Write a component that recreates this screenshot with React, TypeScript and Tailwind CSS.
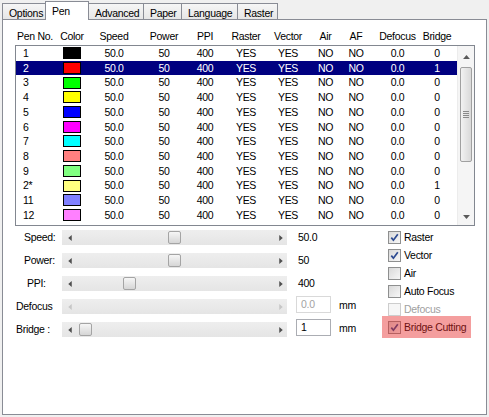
import React from 'react';

const tabs = [
  { label: 'Options', w: 'w-[44px]' },
  { label: 'Pen', w: 'w-[44px]', active: true },
  { label: 'Advanced', w: 'w-[56px]' },
  { label: 'Paper', w: 'w-[39px]' },
  { label: 'Language', w: 'w-[57px]' },
  { label: 'Raster', w: 'w-[41px]' },
];

const pens = [
  { no: '1', sw: 'bg-[#000000]', bridge: '0' },
  { no: '2', sw: 'bg-[#ff0000]', bridge: '1', sel: true },
  { no: '3', sw: 'bg-[#00ff00]', bridge: '0' },
  { no: '4', sw: 'bg-[#ffff00]', bridge: '0' },
  { no: '5', sw: 'bg-[#0000ff]', bridge: '0' },
  { no: '6', sw: 'bg-[#ff00ff]', bridge: '0' },
  { no: '7', sw: 'bg-[#00ffff]', bridge: '0' },
  { no: '8', sw: 'bg-[#ff8080]', bridge: '0' },
  { no: '9', sw: 'bg-[#80ff80]', bridge: '0' },
  { no: '2*', sw: 'bg-[#ffff80]', bridge: '1' },
  { no: '11', sw: 'bg-[#8080ff]', bridge: '0' },
  { no: '12', sw: 'bg-[#ff80ff]', bridge: '0' },
];

// columns after Pen No. / Color, centred on the header text
const cols = [
  { label: 'Speed', w: 'w-[52px]', v: '50.0' },
  { label: 'Power', w: 'w-[48px]', v: '50' },
  { label: 'PPI', w: 'w-[34px]', v: '400' },
  { label: 'Raster', w: 'w-[48px]', v: 'YES' },
  { label: 'Vector', w: 'w-[36px]', v: 'YES' },
  { label: 'Air', w: 'w-[39px]', v: 'NO' },
  { label: 'AF', w: 'w-[22px]', v: 'NO' },
  { label: 'Defocus', w: 'w-[61px]', v: '0.0' },
  { label: 'Bridge', w: 'w-[18px]', v: '' },
];

const sliders = [
  { label: 'Speed:', pl: 'pl-[21px]', thumb: 106, value: '50.0' },
  { label: 'Power:', pl: 'pl-[21px]', thumb: 106, value: '50' },
  { label: 'PPI:', pl: 'pl-[24px]', thumb: 61, value: '400' },
  { label: 'Defocus', pl: 'pl-[13px]', thumb: null, input: '0.0', disabled: true },
  { label: 'Bridge :', pl: 'pl-[13px]', thumb: 17, input: '1' },
];

const checks = [
  { label: 'Raster', on: true },
  { label: 'Vector', on: true },
  { label: 'Air' },
  { label: 'Auto Focus' },
  { label: 'Defocus', disabled: true },
  { label: 'Bridge Cutting', on: true, hl: true },
];

function Tri({ dir, color }: { dir: 'left' | 'right' | 'up' | 'down'; color: string }) {
  const d = {
    left: 'M3.5 0 L0 3 L3.5 6 Z',
    right: 'M0 0 L3.5 3 L0 6 Z',
    up: 'M0 3.5 L3 0 L6 3.5 Z',
    down: 'M0 0 L6 0 L3 3.5 Z',
  }[dir];
  const horiz = dir === 'left' || dir === 'right';
  return (
    <svg width={horiz ? 4 : 7} height={horiz ? 6 : 4} viewBox={horiz ? '0 0 3.5 6' : '0 0 6 3.5'}>
      <path d={d} fill={color} />
    </svg>
  );
}

function Track({ thumb, disabled }: { thumb: number | null; disabled?: boolean }) {
  const c = disabled ? '#c6c6c6' : '#4f4f4f';
  return (
    <div className="relative flex h-[15px] w-[225px] items-center justify-between bg-gradient-to-b from-[#eeeeee] to-[#e5e5e5] pl-[6px] pr-[4px]">
      <Tri dir="left" color={c} />
      <Tri dir="right" color={c} />
      {thumb !== null && (
        <div
          className="absolute top-[1px] h-[13px] w-[13px] rounded-[2px] border border-[#a4a4a4] bg-gradient-to-b from-[#f6f6f6] to-[#d6d6d6]"
          style={{ left: thumb }}
        />
      )}
    </div>
  );
}

function CheckBox({ on, disabled }: { on?: boolean; disabled?: boolean }) {
  return (
    <div
      className={`flex h-[13px] w-[13px] items-center justify-center border ${
        disabled
          ? 'border-[#cdcdcd] bg-[#f6f6f6]'
          : 'border-[#8e8f8f] bg-gradient-to-br from-[#d9d9d9] to-[#f7f7f7]'
      }`}
    >
      {on && (
        <svg width="9" height="9" viewBox="0 0 9 9">
          <path d="M1.3 4.6 L3.4 7.2 L7.8 1.2" fill="none" stroke="#2c4a91" strokeWidth="1.7" />
        </svg>
      )}
    </div>
  );
}

function PenList() {
  return (
    <div className="ml-[12px] flex h-[181px] w-[460px] border border-[#828790] bg-white">
      <div className="flex w-[441px] flex-col">
        {pens.map((p) => (
          <div
            key={p.no}
            className={`flex h-[14.7px] shrink-0 items-center ${p.sel ? 'bg-[#000080] text-white' : 'text-black'}`}
          >
            <div className="w-[40px] pl-[7px]">{p.no}</div>
            <div className="flex w-[32px] justify-center">
              <div className={`h-[12px] w-[18px] border border-black ${p.sw}`} />
            </div>
            {cols.map((c) => (
              <div key={c.label} className={`flex justify-center whitespace-nowrap ${c.w}`}>
                {c.v || p.bridge}
              </div>
            ))}
          </div>
        ))}
      </div>
      <div className="flex w-[17px] flex-col border-l border-[#ececec] bg-[#f5f5f5]">
        <div className="flex h-[21px] items-center justify-center">
          <Tri dir="up" color="#5a5a5a" />
        </div>
        <div className="flex-1 px-[2px]">
          <div className="flex h-[95px] flex-col items-center justify-center gap-[1px] rounded-[2px] border border-[#a0a0a0] bg-gradient-to-r from-[#f2f2f2] to-[#d9d9d9]">
            <div className="h-px w-[6px] bg-[#8a8a8a]" />
            <div className="h-px w-[6px] bg-[#8a8a8a]" />
            <div className="h-px w-[6px] bg-[#8a8a8a]" />
            <div className="h-px w-[6px] bg-[#8a8a8a]" />
          </div>
        </div>
        <div className="flex h-[17px] items-center justify-center">
          <Tri dir="down" color="#5a5a5a" />
        </div>
      </div>
    </div>
  );
}

export default function App() {
  return (
    <div className="h-[417px] w-[489px] bg-[#f0f0f0] font-['Liberation_Sans',Arial,sans-serif] text-[10.5px] leading-none tracking-[-0.3px] text-black">
      <div className="flex h-[19px] items-end pl-[2px]">
        {tabs.map((t, i) => (
          <div
            key={t.label}
            className={`${t.w} ${i > 0 ? '-ml-px' : ''} ${
              t.active
                ? 'relative z-10 -mb-px h-[19px] border-x border-t border-[#898c95] bg-white pt-[4px]'
                : 'h-[16px] border-x border-t border-[#898c95] bg-gradient-to-b from-[#f6f6f6] to-[#e6e6e6] pt-[4px]'
            } pl-[6px] whitespace-nowrap`}
          >
            {t.label}
          </div>
        ))}
      </div>
      <div className="mx-[2px] h-[396px] border border-[#898c95] bg-white">
        <div className="ml-[13px] mt-[9px] flex h-[14px] w-[441px] items-center">
          <div className="w-[40px] pl-[1px] whitespace-nowrap">Pen No.</div>
          <div className="flex w-[32px] justify-center">Color</div>
          {cols.map((c) => (
            <div key={c.label} className={`flex justify-center whitespace-nowrap ${c.w}`}>
              {c.label}
            </div>
          ))}
        </div>
        <div className="mt-[2px]">
          <PenList />
        </div>
        <div className="mt-[2px] flex">
          <div className="flex w-[385px] flex-col gap-[8px] pt-[2px]">
            {sliders.map((s) => (
              <div key={s.label} className="flex h-[15px] items-center">
                <div className={`w-[59px] whitespace-nowrap ${s.pl}`}>{s.label}</div>
                <Track thumb={s.thumb} disabled={s.disabled} />
                {s.input === undefined ? (
                  <div className="pl-[11px]">{s.value}</div>
                ) : (
                  <div className="-mt-[3px] flex h-[17px] items-center self-start">
                    <div
                      className={`ml-[9px] flex h-[17px] w-[35px] items-center border pl-[4px] ${
                        s.disabled ? 'border-[#d9d9d9] text-[#a3a3a3]' : 'border-[#abadb3] text-black'
                      }`}
                    >
                      {s.input}
                    </div>
                    <span className="ml-[8px] pt-[2px]">mm</span>
                  </div>
                )}
              </div>
            ))}
          </div>
          <div className="flex flex-col">
            {checks.map((c) => (
              <div key={c.label} className="relative flex h-[18px] items-center gap-[3px]">
                <CheckBox on={c.on} disabled={c.disabled} />
                <span className={c.disabled ? 'text-[#a0a0a0]' : ''}>{c.label}</span>
                {c.hl && (
                  <div className="absolute -left-[6px] -top-[2px] h-[22px] w-[89px] bg-[rgba(230,40,40,0.45)]" />
                )}
              </div>
            ))}
          </div>
        </div>
      </div>
    </div>
  );
}
